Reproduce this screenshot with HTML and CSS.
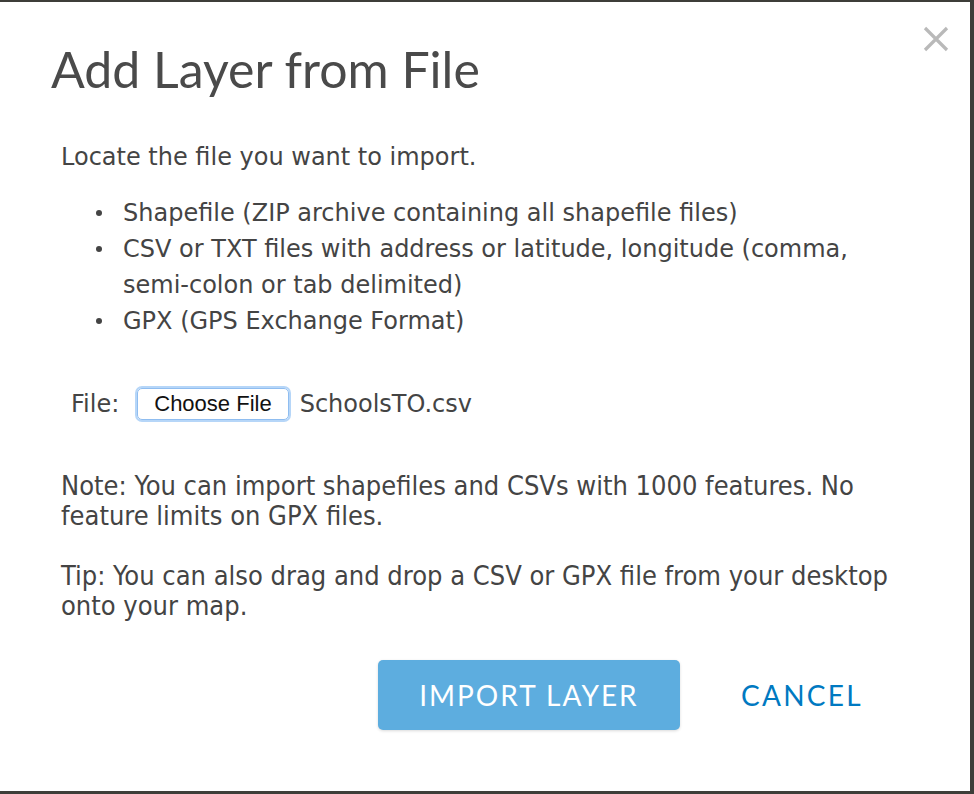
FILE: index.html
```html
<!DOCTYPE html>
<html lang="en">
<head>
    <meta charset="UTF-8">
    <title>Add Layer from File</title>
    <link rel="stylesheet" href="styles.css">
</head>
<body>
    <div class="backdrop">
        <div class="modal">
            <button class="close-btn" aria-label="Close">
                <svg width="26" height="26" viewBox="0 0 26 26">
                    <path d="M2 2 L24 24 M24 2 L2 24" stroke="#b9b9b9" stroke-width="3.2" fill="none"/>
                </svg>
            </button>
            <h1 class="modal-title">Add Layer from File</h1>

            <div class="modal-body">
                <p class="intro">Locate the file you want to import.</p>
                <ul class="formats">
                    <li>Shapefile (ZIP archive containing all shapefile files)</li>
                    <li>CSV or TXT files with address or latitude, longitude (comma, semi-colon or tab delimited)</li>
                    <li>GPX (GPS Exchange Format)</li>
                </ul>

                <div class="file-row">
                    <span class="file-label">File:</span>
                    <span class="choose-btn">Choose File</span>
                    <span class="file-name">SchoolsTO.csv</span>
                </div>

                <p class="hint">Note: You can import shapefiles and CSVs with 1000 features. No feature limits on GPX files.</p>
                <p class="hint">Tip: You can also drag and drop a CSV or GPX file from your desktop onto your map.</p>
            </div>

            <div class="modal-actions">
                <button class="import-btn">IMPORT LAYER</button>
                <button class="cancel-btn">CANCEL</button>
            </div>
        </div>
    </div>
</body>
</html>
```

FILE: styles.css
```css
body {
    margin: 0;
    background-color: #3e3e39;
}
.backdrop {
    padding-top: 2px;
    height: 792px;
    overflow: hidden;
}
.modal {
    position: relative;
    width: 970px;
    height: 789px;
    background-color: #fff;
    box-sizing: border-box;
    padding: 37px 0 0 51px;
}
.close-btn {
    position: absolute;
    top: 24px;
    right: 21px;
    background: none;
    border: none;
    padding: 0;
    cursor: pointer;
}
.modal-title {
    margin: 0;
    font-family: "Lato", sans-serif;
    font-weight: 400;
    font-size: 50px;
    color: #4a4a4a;
    line-height: 60px;
}
.modal-body {
    padding-left: 10px;
    padding-right: 60px;
    font-family: "DejaVu Sans", Verdana, sans-serif;
    font-size: 24px;
    color: #444;
}
.intro {
    margin: 40px 0 0;
    line-height: 36px;
}
.formats {
    margin: 20px 0 0;
    padding-left: 62px;
    line-height: 36px;
    list-style: none;
}
.formats li {
    position: relative;
}
/* small round bullet sitting left of each item */
.formats li::before {
    content: "";
    position: absolute;
    left: -27px;
    top: 15px;
    width: 6px;
    height: 6px;
    border-radius: 50%;
    background-color: #444;
}
.file-row {
    display: flex;
    align-items: center;
    height: 32px;
    margin: 49px 0 0 10px;
}
.file-label {
    margin-right: 18px;
}
.choose-btn {
    font-family: "Liberation Sans", Arial, sans-serif;
    font-size: 22px;
    line-height: 22px;
    color: #111;
    padding: 4px 16px;
    border: 1px solid #8fbdf0;
    border-radius: 5px;
    box-shadow: 0 0 0 2px #b6d6f8;
    margin-right: 11px;
}
.file-name {
    color: #444;
}
.hint {
    font-family: "DejaVu Sans Condensed", Tahoma, sans-serif;
    font-size: 27px;
    line-height: 30px;
    margin: 51px 0 0;
}
.hint + .hint {
    margin-top: 30px;
}
.modal-actions {
    display: flex;
    justify-content: flex-end;
    align-items: center;
    margin: 39px 107px 0 0;
    gap: 61px;
}
.import-btn {
    width: 302px;
    height: 70px;
    background-color: #5daddf;
    color: #fff;
    border: none;
    border-radius: 5px;
    box-shadow: 0 1px 3px rgba(0, 0, 0, 0.15);
    font-family: "Lato", sans-serif;
    font-size: 28px;
    letter-spacing: 2px;
    cursor: pointer;
}
.cancel-btn {
    background: none;
    border: none;
    padding: 0;
    color: #0079c1;
    font-family: "Lato", sans-serif;
    font-size: 28px;
    letter-spacing: 2.3px;
    cursor: pointer;
}
```
